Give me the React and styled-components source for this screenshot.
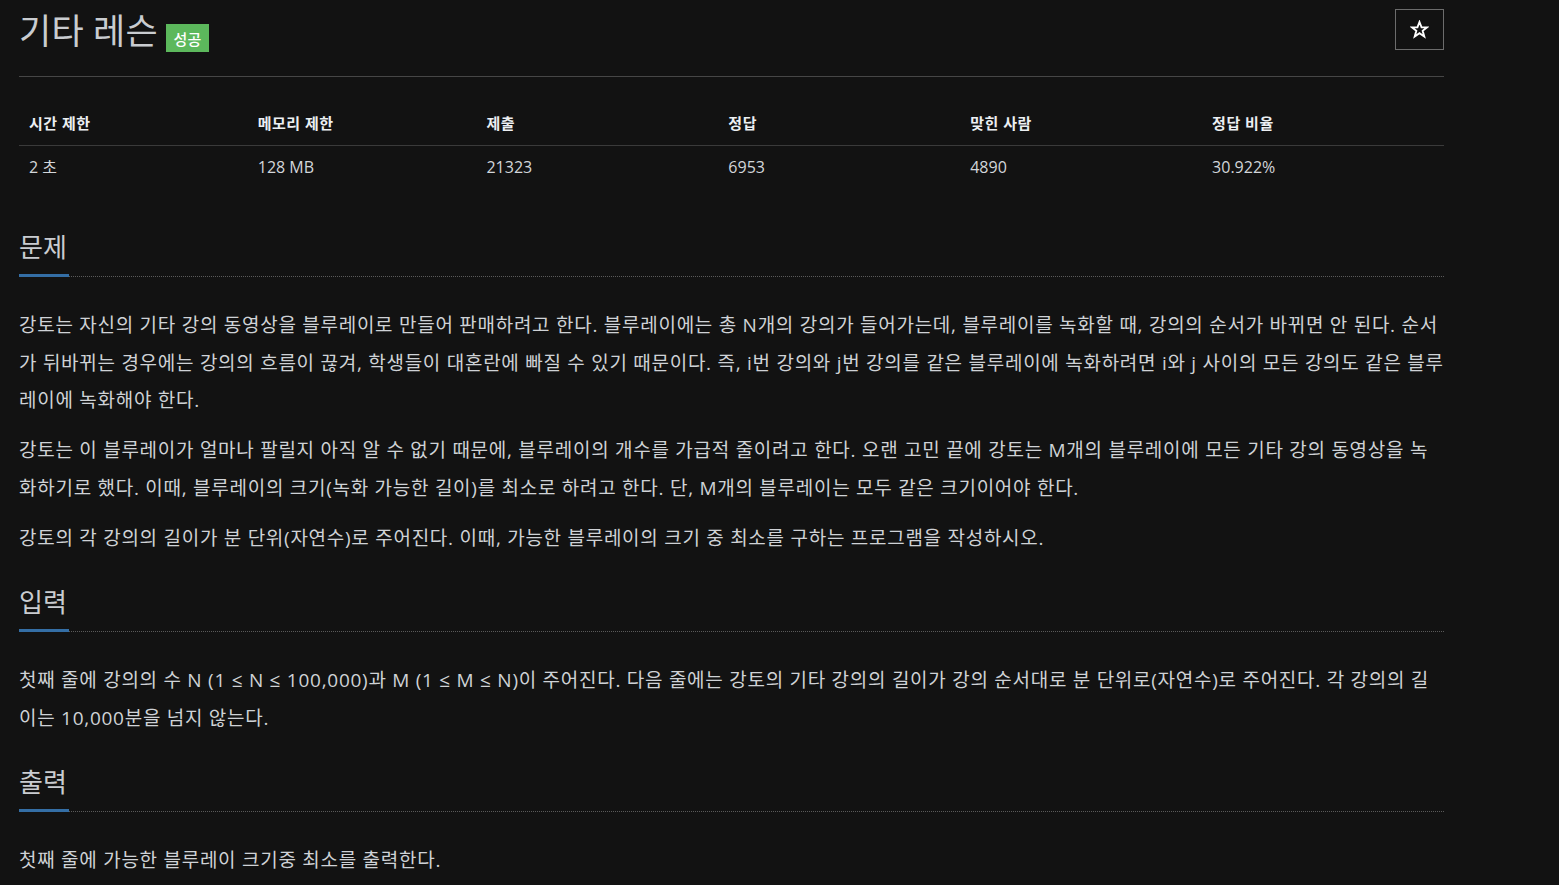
import React from "react";
import styled, { createGlobalStyle } from "styled-components";

const Global = createGlobalStyle`
  html, body { margin: 0; padding: 0; background: #121212; }
  body {
    font-family: "Open Sans", "Noto Sans CJK KR", sans-serif;
    color: #cfd2d6;
    overflow: hidden;
  }
`;

const Page = styled.div`
  width: 1425px;
  margin-left: 19px;
`;

const Header = styled.div`
  display: flex;
  align-items: flex-start;
  justify-content: space-between;
  padding-top: 9px;
  height: 67px;
  border-bottom: 1px solid #464646;
`;

const TitleWrap = styled.div`
  display: flex;
  align-items: flex-start;
  gap: 8px;
`;

const Title = styled.h1`
  margin: 0;
  font-size: 35px;
  line-height: 44px;
  font-weight: 400;
  color: #c9ccd0;
  letter-spacing: 0.2px;
`;

const Badge = styled.span`
  display: inline-flex;
  align-items: center;
  justify-content: center;
  height: 28px;
  width: 43px;
  margin-top: 15px;
  background: #5cb85c;
  color: #fff;
  font-size: 15px;
  font-weight: 500;
`;

const StarButton = styled.button`
  width: 49px;
  height: 41px;
  display: flex;
  align-items: center;
  justify-content: center;
  background: transparent;
  border: 1px solid #6c6c6c;
  padding: 0;
  color: #fff;
`;

const Table = styled.table`
  width: 100%;
  border-collapse: collapse;
  margin-top: 24px;
  table-layout: fixed;
`;

const Th = styled.th`
  text-align: left;
  font-size: 15px;
  font-weight: 700;
  color: #eceff2;
  padding: 12px 10px 12px;
  line-height: 20px;
  letter-spacing: 0.5px;
  border-bottom: 1px solid #3a3a3a;
  width: ${(p) => p.$w};
`;

const Td = styled.td`
  font-size: 16px;
  color: #d3d6da;
  padding: 10px 10px;
  line-height: 22px;
`;

const Section = styled.section`
  margin-top: ${(p) => p.$top || "28px"};
`;

const HeadLine = styled.div`
  border-bottom: 1px dotted #5a5a5a;
  display: flex;
`;

const Heading = styled.h2`
  margin: 0 0 -1px;
  font-size: 26px;
  line-height: 34px;
  font-weight: 400;
  color: #c9ccd0;
  padding-bottom: 10px;
  width: 50px;
  border-bottom: 3px solid #346ea5;
  white-space: nowrap;
`;

const Body = styled.div`
  padding-top: 30px;
`;

const P = styled.p`
  margin: 0 0 12.5px;
  font-size: 19px;
  line-height: 37.5px;
  letter-spacing: 0.73px;
  color: #cfd2d6;
`;

const StarIcon = () => (
  <svg width="19" height="19" viewBox="0 0 24 24" fill="none" stroke="#fff" strokeWidth="2.4" strokeLinejoin="miter">
    <polygon points="12,2.5 14.6,9.2 21.6,9.3 16,13.7 18,20.8 12,16.6 6,20.8 8,13.7 2.4,9.3 9.4,9.2" />
  </svg>
);

const cols = [
  { label: "시간 제한", value: "2 초", w: "16%" },
  { label: "메모리 제한", value: "128 MB", w: "16%" },
  { label: "제출", value: "21323", w: "17%" },
  { label: "정답", value: "6953", w: "17%" },
  { label: "맞힌 사람", value: "4890", w: "17%" },
  { label: "정답 비율", value: "30.922%", w: "17%" },
];

export default function App() {
  return (
    <>
      <Global />
      <Page>
        <Header>
          <TitleWrap>
            <Title>기타 레슨</Title>
            <Badge>성공</Badge>
          </TitleWrap>
          <StarButton aria-label="즐겨찾기">
            <StarIcon />
          </StarButton>
        </Header>

        <Table>
          <thead>
            <tr>
              {cols.map((c) => (
                <Th key={c.label} $w={c.w}>{c.label}</Th>
              ))}
            </tr>
          </thead>
          <tbody>
            <tr>
              {cols.map((c) => (
                <Td key={c.label}>{c.value}</Td>
              ))}
            </tr>
          </tbody>
        </Table>

        <Section $top="42px">
          <HeadLine><Heading>문제</Heading></HeadLine>
          <Body>
            <P>강토는 자신의 기타 강의 동영상을 블루레이로 만들어 판매하려고 한다. 블루레이에는 총 N개의 강의가 들어가는데, 블루레이를 녹화할 때, 강의의 순서가 바뀌면 안 된다. 순서가 뒤바뀌는 경우에는 강의의 흐름이 끊겨, 학생들이 대혼란에 빠질 수 있기 때문이다. 즉, i번 강의와 j번 강의를 같은 블루레이에 녹화하려면 i와 j 사이의 모든 강의도 같은 블루레이에 녹화해야 한다.</P>
            <P>강토는 이 블루레이가 얼마나 팔릴지 아직 알 수 없기 때문에, 블루레이의 개수를 가급적 줄이려고 한다. 오랜 고민 끝에 강토는 M개의 블루레이에 모든 기타 강의 동영상을 녹화하기로 했다. 이때, 블루레이의 크기(녹화 가능한 길이)를 최소로 하려고 한다. 단, M개의 블루레이는 모두 같은 크기이어야 한다.</P>
            <P>강토의 각 강의의 길이가 분 단위(자연수)로 주어진다. 이때, 가능한 블루레이의 크기 중 최소를 구하는 프로그램을 작성하시오.</P>
          </Body>
        </Section>

        <Section>
          <HeadLine><Heading>입력</Heading></HeadLine>
          <Body>
            <P>첫째 줄에 강의의 수 N (1 ≤ N ≤ 100,000)과 M (1 ≤ M ≤ N)이 주어진다. 다음 줄에는 강토의 기타 강의의 길이가 강의 순서대로 분 단위로(자연수)로 주어진다. 각 강의의 길이는 10,000분을 넘지 않는다.</P>
          </Body>
        </Section>

        <Section>
          <HeadLine><Heading>출력</Heading></HeadLine>
          <Body>
            <P>첫째 줄에 가능한 블루레이 크기중 최소를 출력한다.</P>
          </Body>
        </Section>
      </Page>
    </>
  );
}
